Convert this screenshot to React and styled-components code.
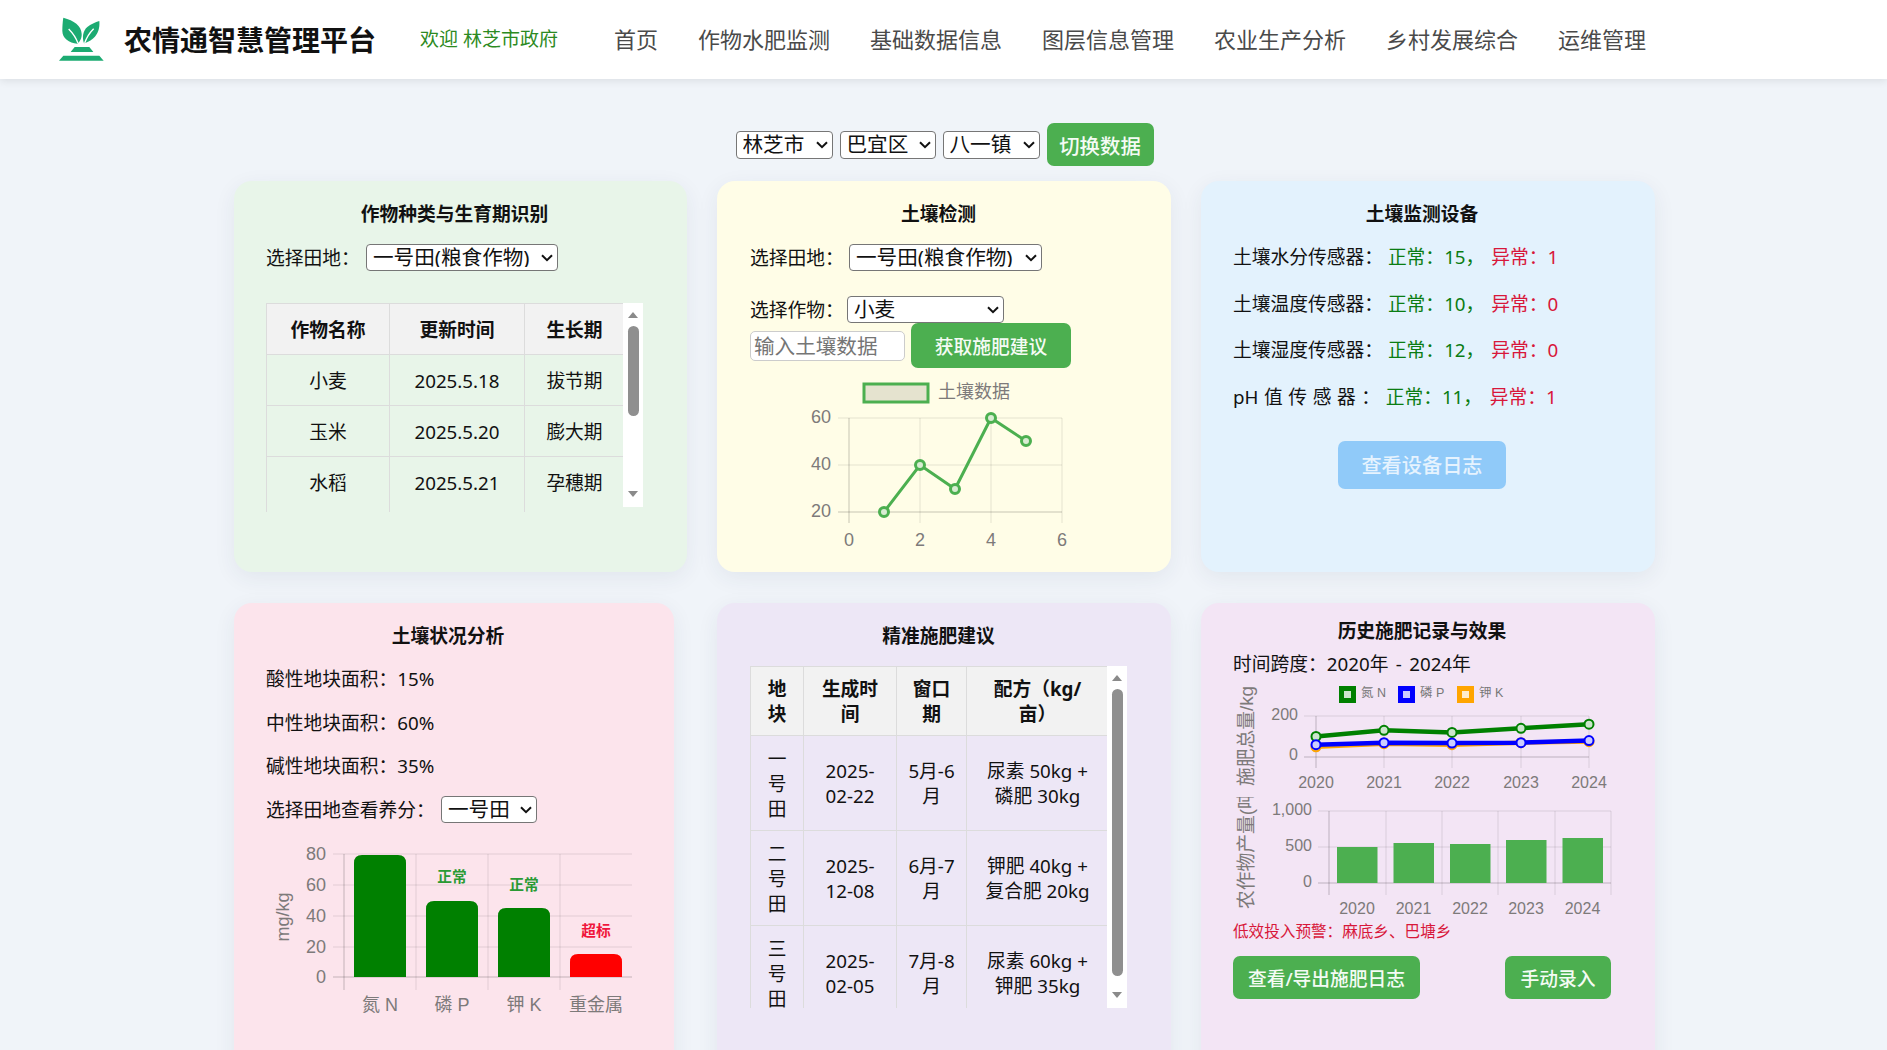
import React from "react";
import styled, { createGlobalStyle } from "styled-components";

const GlobalStyle = createGlobalStyle`
  html, body {
    margin: 0;
    height: 100%;
    overflow: hidden;
    background: #f0f4f9;
  }
  body {
    font-family: "Noto Sans", "Noto Sans CJK SC", sans-serif;
    font-size: 18.75px;
    line-height: 25px;
    color: #111;
  }
`;

const chartFont = `"Liberation Sans", "Noto Sans CJK SC", sans-serif`;

const Header = styled.header`
  display: flex;
  align-items: center;
  height: 79px;
  padding-left: 54px;
  background: #fff;
  box-shadow: 0 2px 8px rgba(0, 0, 0, 0.09);
`;

const Brand = styled.h1`
  margin: 0 0 0 16px;
  font-size: 28px;
  line-height: 40px;
  font-weight: 700;
  color: #111;
`;

const Welcome = styled.span`
  margin-left: 44px;
  font-size: 19px;
  color: #2c8a22;
`;

const Nav = styled.nav`
  display: flex;
  gap: 40px;
  margin-left: 56px;
  font-size: 22px;
  color: #4a4a4a;
`;

const Page = styled.main`
  padding-left: 234px;
`;

const RegionBar = styled.div`
  display: flex;
  align-items: center;
  justify-content: center;
  gap: 7px;
  width: 1421px;
  margin-top: 44px;
  margin-bottom: 15px;
`;

const SelectBox = styled.span`
  position: relative;
  display: block;
  flex: none;
  width: ${(p) => p.$w}px;
  height: ${(p) => p.$h}px;
`;

const NativeSelect = styled.select`
  appearance: none;
  box-sizing: border-box;
  display: block;
  width: 100%;
  height: 100%;
  padding: 0 0 3px 6px;
  font-family: inherit;
  font-size: 20.6px;
  line-height: 24px;
  color: #111;
  background: #fff;
  border: 1px solid #767676;
  border-radius: 4px;
`;

const Chevron = styled.svg`
  position: absolute;
  top: 50%;
  right: 5px;
  margin-top: -4px;
  pointer-events: none;
`;

function Dropdown({ w, h = 27, children }) {
  return (
    <SelectBox $w={w} $h={h}>
      <NativeSelect>{children}</NativeSelect>
      <Chevron width="12" height="8" viewBox="0 0 12 8">
        <path d="M1 1.2l5 5 5-5" fill="none" stroke="#111" strokeWidth="2" />
      </Chevron>
    </SelectBox>
  );
}

const Button = styled.button`
  box-sizing: border-box;
  display: block;
  flex: none;
  width: ${(p) => p.$w}px;
  height: ${(p) => p.$h}px;
  padding: 0;
  font-family: inherit;
  font-size: ${(p) => p.$size || 18.75}px;
  font-weight: 500;
  color: #f4fbf4;
  background: #4caf50;
  border: none;
  border-radius: 7px;
`;

const LightButton = styled(Button)`
  margin: 32px auto 0;
  color: #e6f3fe;
  background: #90caf9;
`;

const Grid = styled.div`
  display: grid;
  grid-template-columns: 453px 454px 454px;
  column-gap: 30px;
  row-gap: 31px;
`;

const Card = styled.section`
  box-sizing: border-box;
  width: ${(p) => p.$w || "auto"};
  height: ${(p) => p.$h}px;
  padding: ${(p) => p.$top || 20}px 44px 0 ${(p) => p.$left || 32}px;
  background: ${(p) => p.$bg};
  border-radius: 18px;
  box-shadow: 0 6px 22px rgba(40, 60, 90, 0.07);
`;

const CardTitle = styled.h2`
  margin: 0 0 ${(p) => p.$gap || 18}px;
  font-size: 18.75px;
  line-height: 25px;
  font-weight: 700;
  text-align: center;
  color: #111;
`;

const FieldRow = styled.div`
  display: flex;
  align-items: center;
  height: 27px;
  margin-top: ${(p) => p.$mt || 0}px;
`;

const Label = styled.label`
  width: ${(p) => p.$w}px;
  flex: none;
`;

const InputRow = styled.div`
  display: flex;
  align-items: center;
  gap: 6px;
`;

const SoilInput = styled.input`
  box-sizing: border-box;
  width: 155px;
  height: 30px;
  padding: 0 3px;
  font-family: inherit;
  font-size: 20.6px;
  background: #fff;
  border: 1px solid #ccc;
  border-radius: 5px;
  &::placeholder {
    color: #757575;
  }
`;

const ScrollFrame = styled.div`
  display: flex;
  align-items: flex-start;
  margin-top: ${(p) => p.$mt || 0}px;
`;

const TableClip = styled.div`
  width: ${(p) => p.$w}px;
  height: ${(p) => p.$h}px;
  overflow: hidden;
`;

const ScrollBar = styled.div`
  box-sizing: border-box;
  display: flex;
  flex-direction: column;
  align-items: center;
  width: 20px;
  height: ${(p) => p.$h}px;
  padding: 9px 0 10px;
  background: #fff;
`;

const ArrowUp = styled.i`
  width: 0;
  height: 0;
  border-left: 5px solid transparent;
  border-right: 5px solid transparent;
  border-bottom: 6px solid #8a8a8a;
`;

const ArrowDown = styled.i`
  width: 0;
  height: 0;
  margin-top: auto;
  border-left: 5px solid transparent;
  border-right: 5px solid transparent;
  border-top: 6px solid #8a8a8a;
`;

const Thumb = styled.div`
  width: 11px;
  height: ${(p) => p.$h}px;
  margin-top: 8px;
  background: #8f8f8f;
  border-radius: 6px;
`;

const Table = styled.table`
  width: ${(p) => p.$w}px;
  table-layout: fixed;
  border-collapse: collapse;
  font-size: 18.75px;
  line-height: 25px;
  text-align: center;

  ${(p) =>
    p.$open &&
    `tbody tr:last-child td {
      padding-bottom: 18px;
      vertical-align: top;
      border-bottom: none;
    }`}
`;

const Th = styled.th`
  padding: ${(p) => p.$pad}px 12px;
  font-weight: 700;
  background: #f2f2f2;
  border: 1px solid #dcdcdc;
`;

const Td = styled.td`
  padding: ${(p) => p.$pad}px 10px;
  border: 1px solid #dcdcdc;
`;

const StatRow = styled.p`
  margin: ${(p) => p.$mt ?? 0}px 0 0;
  white-space: pre;
  word-spacing: ${(p) => p.$ws || 0}px;
`;

const Good = styled.span`
  color: #0a7d12;
`;

const Bad = styled.span`
  margin-left: 2px;
  color: #d8173a;
`;

const Warning = styled.p`
  margin: 1px 0 0;
  font-size: 15.6px;
  line-height: 20px;
  color: #d8173a;
`;

const ButtonRow = styled.div`
  display: flex;
  justify-content: space-between;
  margin-top: 15px;
`;

const ChartSvg = styled.svg`
  display: block;
  overflow: visible;
  margin-top: ${(p) => p.$mt || 0}px;
  margin-left: ${(p) => p.$ml || 0}px;
`;

const ClippedSvg = styled(ChartSvg)`
  overflow: hidden;
`;

const AxisText = styled.text`
  font-family: ${chartFont};
  font-size: ${(p) => p.$size || 18}px;
  fill: ${(p) => p.$fill || "#7d7a7a"};
  font-weight: ${(p) => (p.$bold ? 700 : 400)};
`;

const GridLine = styled.line`
  stroke: ${(p) => (p.$axis ? "rgba(0,0,0,0.22)" : "rgba(0,0,0,0.1)")};
  stroke-width: 1;
`;

const roundTop = (x, top, w, bottom, r) =>
  `M${x} ${bottom}V${top + r}Q${x} ${top} ${x + r} ${top}H${x + w - r}Q${x + w} ${top} ${x + w} ${top + r}V${bottom}Z`;

function Logo() {
  return (
    <svg width="54" height="54" viewBox="0 0 162 162">
      <path d="M28 14C60 22 82 38 83 62C84 74 78 86 70 92C45 90 25 76 25 54C25 40 26 26 28 14Z" fill="#1cab72" />
      <path d="M44 48C56 60 66 74 72 91" stroke="#fff" strokeWidth="4" fill="none" />
      <path d="M136 24C138 50 130 78 90 91C84 74 86 54 100 42C110 34 124 28 136 24Z" fill="#1cab72" />
      <path d="M119 47C108 58 98 72 92 90" stroke="#fff" strokeWidth="4" fill="none" />
      <path d="M62 102H106L118 117H50Z" fill="#1cab72" />
      <path d="M28 128H136L149 143H15Z" fill="#1cab72" />
    </svg>
  );
}

function SoilChart() {
  const pts = [
    [884, 512],
    [920, 465],
    [955, 489],
    [991, 418],
    [1026, 441],
  ];
  return (
    <ChartSvg $mt={7} $ml={50} width="290" height="185" viewBox="800 375 290 185">
      <rect x="864" y="384" width="64" height="18" fill="rgba(0,0,0,0.1)" stroke="#4caf50" strokeWidth="3" />
      <AxisText x="938" y="398" $size={18}>
        土壤数据
      </AxisText>
      {[418, 465, 512].map((y) => (
        <GridLine key={y} x1="838" x2="1062" y1={y} y2={y} $axis={y === 512} />
      ))}
      {[849, 920, 991, 1062].map((x) => (
        <GridLine key={x} x1={x} x2={x} y1="418" y2="523" $axis={x === 849} />
      ))}
      {[["60", 418], ["40", 465], ["20", 512]].map(([t, y]) => (
        <AxisText key={t} x="831" y={y + 5} textAnchor="end">
          {t}
        </AxisText>
      ))}
      {[["0", 849], ["2", 920], ["4", 991], ["6", 1062]].map(([t, x]) => (
        <AxisText key={t} x={x} y="546" textAnchor="middle">
          {t}
        </AxisText>
      ))}
      <polyline points={pts.map((p) => p.join(",")).join(" ")} fill="none" stroke="#4caf50" strokeWidth="3" />
      {pts.map(([x, y]) => (
        <circle key={x} cx={x} cy={y} r="4.5" fill="#d9ecd3" stroke="#4caf50" strokeWidth="3" />
      ))}
    </ChartSvg>
  );
}

function NutrientChart() {
  const bars = [
    { x: 354, top: 855, color: "#008000", name: "氮 N" },
    { x: 426, top: 901, color: "#008000", name: "磷 P", tag: "正常", tagY: 882, tagFill: "#2a9a34" },
    { x: 498, top: 908, color: "#008000", name: "钾 K", tag: "正常", tagY: 890, tagFill: "#2a9a34" },
    { x: 570, top: 954, color: "#ff0000", name: "重金属", tag: "超标", tagY: 936, tagFill: "#f0163c" },
  ];
  return (
    <ChartSvg $mt={15} $ml={1} width="373" height="182" viewBox="267 838 373 182">
      {[854, 885, 916, 947, 977].map((y) => (
        <GridLine key={y} x1="333" x2="632" y1={y} y2={y} $axis={y === 977} />
      ))}
      {[344, 416, 488, 560].map((x) => (
        <GridLine key={x} x1={x} x2={x} y1="854" y2="990" $axis={x === 344} />
      ))}
      {[["80", 854], ["60", 885], ["40", 916], ["20", 947], ["0", 977]].map(([t, y]) => (
        <AxisText key={t} x="326" y={y + 6} textAnchor="end">
          {t}
        </AxisText>
      ))}
      <AxisText x="289" y="917" textAnchor="middle" transform="rotate(-90 289 917)">
        mg/kg
      </AxisText>
      {bars.map((b) => (
        <g key={b.name}>
          <path d={roundTop(b.x, b.top, 52, 977, 8)} fill={b.color} />
          <AxisText x={b.x + 26} y="1011" textAnchor="middle">
            {b.name}
          </AxisText>
          {b.tag && (
            <AxisText x={b.x + 26} y={b.tagY} textAnchor="middle" $size={14.7} $bold $fill={b.tagFill}>
              {b.tag}
            </AxisText>
          )}
        </g>
      ))}
    </ChartSvg>
  );
}

const YEARS = ["2020", "2021", "2022", "2023", "2024"];

function InputLineChart() {
  const xs = [1316, 1384, 1452, 1521, 1589];
  const toY = (v) => 757 - (v * 41) / 200;
  const series = [
    { color: "#ffa500", fill: "#ffedcc", values: [50, 65, 60, 70, 75] },
    { color: "#008000", fill: "#cce6cc", values: [100, 130, 120, 140, 160] },
    { color: "#0000ff", fill: "#ccccff", values: [60, 70, 68, 70, 80] },
  ];
  const legend = [
    { name: "氮 N", x: 1339, color: "#008000", fill: "#cce6cc" },
    { name: "磷 P", x: 1398, color: "#0000ff", fill: "#ccccff" },
    { name: "钾 K", x: 1457, color: "#ffa500", fill: "#ffedcc" },
  ];
  return (
    <ChartSvg $mt={1} width="380" height="118" viewBox="1233 677 380 118">
      {legend.map((l) => (
        <g key={l.name}>
          <rect x={l.x + 2.5} y="688.5" width="12" height="12" fill={l.fill} stroke={l.color} strokeWidth="5" />
          <AxisText x={l.x + 22} y="697" $size={12.5} $fill="#777">
            {l.name}
          </AxisText>
        </g>
      ))}
      {[716, 757].map((y) => (
        <GridLine key={y} x1="1304" x2="1589" y1={y} y2={y} $axis={y === 757} />
      ))}
      {xs.map((x) => (
        <GridLine key={x} x1={x} x2={x} y1="716" y2="768" $axis={x === 1316} />
      ))}
      <AxisText x="1298" y="720" textAnchor="end" $size={16}>
        200
      </AxisText>
      <AxisText x="1298" y="760" textAnchor="end" $size={16}>
        0
      </AxisText>
      <AxisText x="1253" y="736" textAnchor="middle" transform="rotate(-90 1253 736)" $size={18.75}>
        施肥总量/kg
      </AxisText>
      {YEARS.map((t, i) => (
        <AxisText key={t} x={xs[i]} y="788" textAnchor="middle" $size={16}>
          {t}
        </AxisText>
      ))}
      {series.map((s) => (
        <g key={s.color}>
          <polyline
            points={s.values.map((v, i) => `${xs[i]},${toY(v)}`).join(" ")}
            fill="none"
            stroke={s.color}
            strokeWidth="4.5"
          />
          {s.values.map((v, i) => (
            <circle key={xs[i]} cx={xs[i]} cy={toY(v)} r="4.5" fill={s.fill} stroke={s.color} strokeWidth="2" />
          ))}
        </g>
      ))}
    </ChartSvg>
  );
}

function YieldBarChart() {
  const xs = [1337, 1393.5, 1450, 1506, 1562.5];
  const tops = [847, 843, 844, 840, 838];
  return (
    <ClippedSvg $mt={2} width="380" height="123" viewBox="1233 797 380 123">
      {[811, 847, 883].map((y) => (
        <GridLine key={y} x1="1318" x2="1611" y1={y} y2={y} $axis={y === 883} />
      ))}
      {[1329, 1386, 1442, 1498, 1555, 1611].map((x) => (
        <GridLine key={x} x1={x} x2={x} y1="811" y2="895" $axis={x === 1329} />
      ))}
      {[["1,000", 811], ["500", 847], ["0", 883]].map(([t, y]) => (
        <AxisText key={t} x="1312" y={y + 4} textAnchor="end" $size={16}>
          {t}
        </AxisText>
      ))}
      <AxisText x="1253" y="909" transform="rotate(-90 1253 909)" $size={18.75}>
        农作物产量(吨)
      </AxisText>
      {xs.map((x, i) => (
        <rect key={x} x={x} y={tops[i]} width="40.5" height={883 - tops[i]} fill="#4caf50" />
      ))}
      {YEARS.map((t, i) => (
        <AxisText key={t} x={xs[i] + 20} y="914" textAnchor="middle" $size={16}>
          {t}
        </AxisText>
      ))}
    </ClippedSvg>
  );
}

const cropRows = [
  ["小麦", "2025.5.18", "拔节期"],
  ["玉米", "2025.5.20", "膨大期"],
  ["水稻", "2025.5.21", "孕穗期"],
];

const adviceRows = [
  ["一号田", "2025-02-22", "5月-6月", "尿素 50kg + 磷肥 30kg"],
  ["二号田", "2025-12-08", "6月-7月", "钾肥 40kg + 复合肥 20kg"],
  ["三号田", "2025-02-05", "7月-8月", "尿素 60kg + 钾肥 35kg"],
];

const sensors = [
  ["土壤水分传感器：", 15, 1],
  ["土壤温度传感器：", 10, 0],
  ["土壤湿度传感器：", 12, 0],
  ["pH 值 传 感 器 ：", 11, 1],
];

export default function App() {
  return (
    <>
      <GlobalStyle />
      <Header>
        <Logo />
        <Brand>农情通智慧管理平台</Brand>
        <Welcome>欢迎 林芝市政府</Welcome>
        <Nav>
          <span>首页</span>
          <span>作物水肥监测</span>
          <span>基础数据信息</span>
          <span>图层信息管理</span>
          <span>农业生产分析</span>
          <span>乡村发展综合</span>
          <span>运维管理</span>
        </Nav>
      </Header>

      <Page>
        <RegionBar>
          <Dropdown w={97} h={28}>
            <option>林芝市</option>
          </Dropdown>
          <Dropdown w={96} h={28}>
            <option>巴宜区</option>
          </Dropdown>
          <Dropdown w={97} h={28}>
            <option>八一镇</option>
          </Dropdown>
          <Button $w={107} $h={43} $size={20.4}>
            切换数据
          </Button>
        </RegionBar>

        <Grid>
          <Card $bg="#e8f5e9" $h={391}>
            <CardTitle>作物种类与生育期识别</CardTitle>
            <FieldRow>
              <Label $w={100}>选择田地：</Label>
              <Dropdown w={192}>
                <option>一号田(粮食作物)</option>
              </Dropdown>
            </FieldRow>
            <ScrollFrame $mt={32}>
              <TableClip $w={358} $h={209}>
                <Table $w={358} $open>
                  <colgroup>
                    <col width="123" />
                    <col width="135" />
                    <col width="100" />
                  </colgroup>
                  <thead>
                    <tr>
                      <Th $pad={12.5}>作物名称</Th>
                      <Th $pad={12.5}>更新时间</Th>
                      <Th $pad={12.5}>生长期</Th>
                    </tr>
                  </thead>
                  <tbody>
                    {cropRows.map((row) => (
                      <tr key={row[0]}>
                        {row.map((cell) => (
                          <Td key={cell} $pad={12.5}>
                            {cell}
                          </Td>
                        ))}
                      </tr>
                    ))}
                  </tbody>
                </Table>
              </TableClip>
              <ScrollBar $h={204}>
                <ArrowUp />
                <Thumb $h={90} />
                <ArrowDown />
              </ScrollBar>
            </ScrollFrame>
          </Card>

          <Card $bg="#fffde7" $h={391} $left={33}>
            <CardTitle>土壤检测</CardTitle>
            <FieldRow>
              <Label $w={99}>选择田地：</Label>
              <Dropdown w={193}>
                <option>一号田(粮食作物)</option>
              </Dropdown>
            </FieldRow>
            <FieldRow $mt={25}>
              <Label $w={97}>选择作物：</Label>
              <Dropdown w={157}>
                <option>小麦</option>
              </Dropdown>
            </FieldRow>
            <InputRow>
              <SoilInput placeholder="输入土壤数据" />
              <Button $w={160} $h={45}>
                获取施肥建议
              </Button>
            </InputRow>
            <SoilChart />
          </Card>

          <Card $bg="#e3f2fd" $h={391}>
            <CardTitle>土壤监测设备</CardTitle>
            {sensors.map(([name, ok, bad], i) => (
              <StatRow key={name} $mt={i ? 21.5 : 0} $ws={i === 3 ? 0.7 : 0}>
                {name} <Good>正常：{ok}，</Good> <Bad>异常：{bad}</Bad>
              </StatRow>
            ))}
            <LightButton $w={168} $h={48} $size={20.2}>
              查看设备日志
            </LightButton>
          </Card>

          <Card $bg="#fce4ec" $h={480} $w="440px">
            <CardTitle>土壤状况分析</CardTitle>
            <StatRow>酸性地块面积：15%</StatRow>
            <StatRow $mt={18.5}>中性地块面积：60%</StatRow>
            <StatRow $mt={18.5}>碱性地块面积：35%</StatRow>
            <FieldRow $mt={18}>
              <Label $w={175}>选择田地查看养分：</Label>
              <Dropdown w={96}>
                <option>一号田</option>
              </Dropdown>
            </FieldRow>
            <NutrientChart />
          </Card>

          <Card $bg="#ede7f6" $h={480} $left={33}>
            <CardTitle>精准施肥建议</CardTitle>
            <ScrollFrame>
              <TableClip $w={358} $h={342}>
                <Table $w={358}>
                  <colgroup>
                    <col width="53" />
                    <col width="93" />
                    <col width="70" />
                    <col width="142" />
                  </colgroup>
                  <thead>
                    <tr>
                      <Th $pad={9}>地块</Th>
                      <Th $pad={9}>生成时间</Th>
                      <Th $pad={9}>窗口期</Th>
                      <Th $pad={9}>
                        配方（kg/
                        <br />
                        亩）
                      </Th>
                    </tr>
                  </thead>
                  <tbody>
                    {adviceRows.map((row) => (
                      <tr key={row[0]}>
                        {row.map((cell) => (
                          <Td key={cell} $pad={9.5}>
                            {cell}
                          </Td>
                        ))}
                      </tr>
                    ))}
                  </tbody>
                </Table>
              </TableClip>
              <ScrollBar $h={342}>
                <ArrowUp />
                <Thumb $h={287} />
                <ArrowDown />
              </ScrollBar>
            </ScrollFrame>
          </Card>

          <Card $bg="#f3e5f5" $h={480} $top={15}>
            <CardTitle $gap={8}>历史施肥记录与效果</CardTitle>
            <StatRow $ws={2.5}>时间跨度：2020年 - 2024年</StatRow>
            <InputLineChart />
            <YieldBarChart />
            <Warning>低效投入预警：麻底乡、巴塘乡</Warning>
            <ButtonRow>
              <Button $w={187} $h={43}>
                查看/导出施肥日志
              </Button>
              <Button $w={106} $h={43}>
                手动录入
              </Button>
            </ButtonRow>
          </Card>
        </Grid>
      </Page>
    </>
  );
}
